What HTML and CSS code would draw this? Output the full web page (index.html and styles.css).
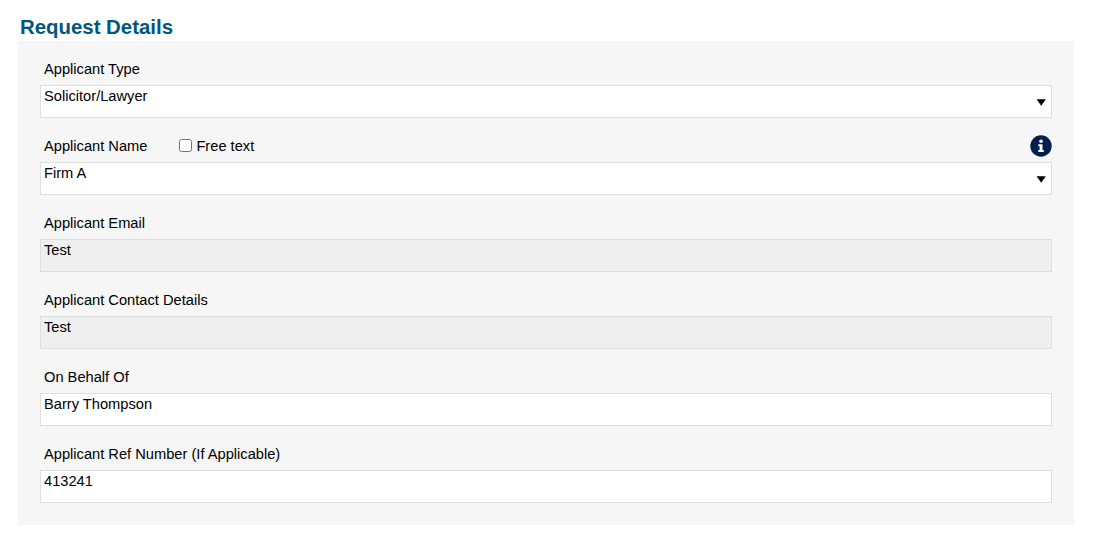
FILE: index.html
```html
<!DOCTYPE html>
<html lang="en">
<head>
  <meta charset="UTF-8" />
  <title>Request Details</title>
  <link rel="stylesheet" href="styles.css">
</head>
<body>
  <h1>Request Details</h1>

  <form class="panel">
    <div class="field">
      <div class="label-row">
        <label for="applicantType">Applicant Type</label>
      </div>
      <div class="dropdown">
        <select id="applicantType">
          <option>Solicitor/Lawyer</option>
        </select>
        <svg class="arrow" width="10" height="7" viewBox="0 0 10 7"><path d="M0.6 0.2h9.2L5.2 6.7z" /></svg>
      </div>
    </div>

    <div class="field">
      <div class="label-row">
        <label class="name-label" for="applicantName">Applicant Name</label>
        <input type="checkbox" id="freeText" />
        <label for="freeText">Free text</label>
        <!-- Info icon -->
        <svg class="info" width="22" height="22" viewBox="0 0 22 22">
          <circle cx="11" cy="11" r="10.7" fill="#001f4f" />
          <circle cx="11" cy="6.3" r="1.8" fill="#fff" />
          <path d="M8.3 9.3h4.2v5.6h1.3v2H8.3v-2h1.3v-3.6H8.3z" fill="#fff" />
        </svg>
      </div>
      <div class="dropdown">
        <select id="applicantName">
          <option>Firm A</option>
        </select>
        <svg class="arrow" width="10" height="7" viewBox="0 0 10 7"><path d="M0.6 0.2h9.2L5.2 6.7z" /></svg>
      </div>
    </div>

    <div class="field">
      <div class="label-row">
        <label for="applicantEmail">Applicant Email</label>
      </div>
      <input type="text" id="applicantEmail" value="Test" readonly />
    </div>

    <div class="field">
      <div class="label-row">
        <label for="contactDetails">Applicant Contact Details</label>
      </div>
      <input type="text" id="contactDetails" value="Test" readonly />
    </div>

    <div class="field">
      <div class="label-row">
        <label for="onBehalfOf">On Behalf Of</label>
      </div>
      <input type="text" id="onBehalfOf" value="Barry Thompson" />
    </div>

    <div class="field">
      <div class="label-row">
        <label for="refNumber">Applicant Ref Number (If Applicable)</label>
      </div>
      <input type="text" id="refNumber" value="413241" />
    </div>
  </form>
</body>
</html>
```
FILE: styles.css
```css
* {
  box-sizing: border-box;
}

body {
  margin: 0;
  padding: 14px 19px 14px 18px;
  background: #ffffff;
  color: #000000;
  font-family: "Liberation Sans", Arial, sans-serif;
  font-size: 14.667px;
}

h1 {
  margin: 0;
  padding-left: 2px;
  height: 27px;
  line-height: 26px;
  font-size: 20.4px;
  color: #00577d;
}

.panel {
  padding: 0 22px 22px;
  background: #f6f6f6;
}

.label-row {
  display: flex;
  align-items: center;
  height: 44px;
  padding: 12px 0 0 4px;
}

.name-label {
  width: 135px;
}

input[type="checkbox"] {
  width: 13px;
  height: 13px;
  margin: 0 4.4px 2px 0;
}

.info {
  margin-left: auto;
}

input[type="text"],
select {
  display: block;
  width: 100%;
  height: 33px;
  padding: 0 3px 12px;
  border: 1px solid #dedede;
  border-radius: 0;
  background: #ffffff;
  color: #000000;
  font: inherit;
  outline: none;
  appearance: none;
}

input[readonly] {
  background: #efefef;
}

.dropdown {
  position: relative;
}

.arrow {
  position: absolute;
  top: 14px;
  right: 6px;
  pointer-events: none;
}
```
